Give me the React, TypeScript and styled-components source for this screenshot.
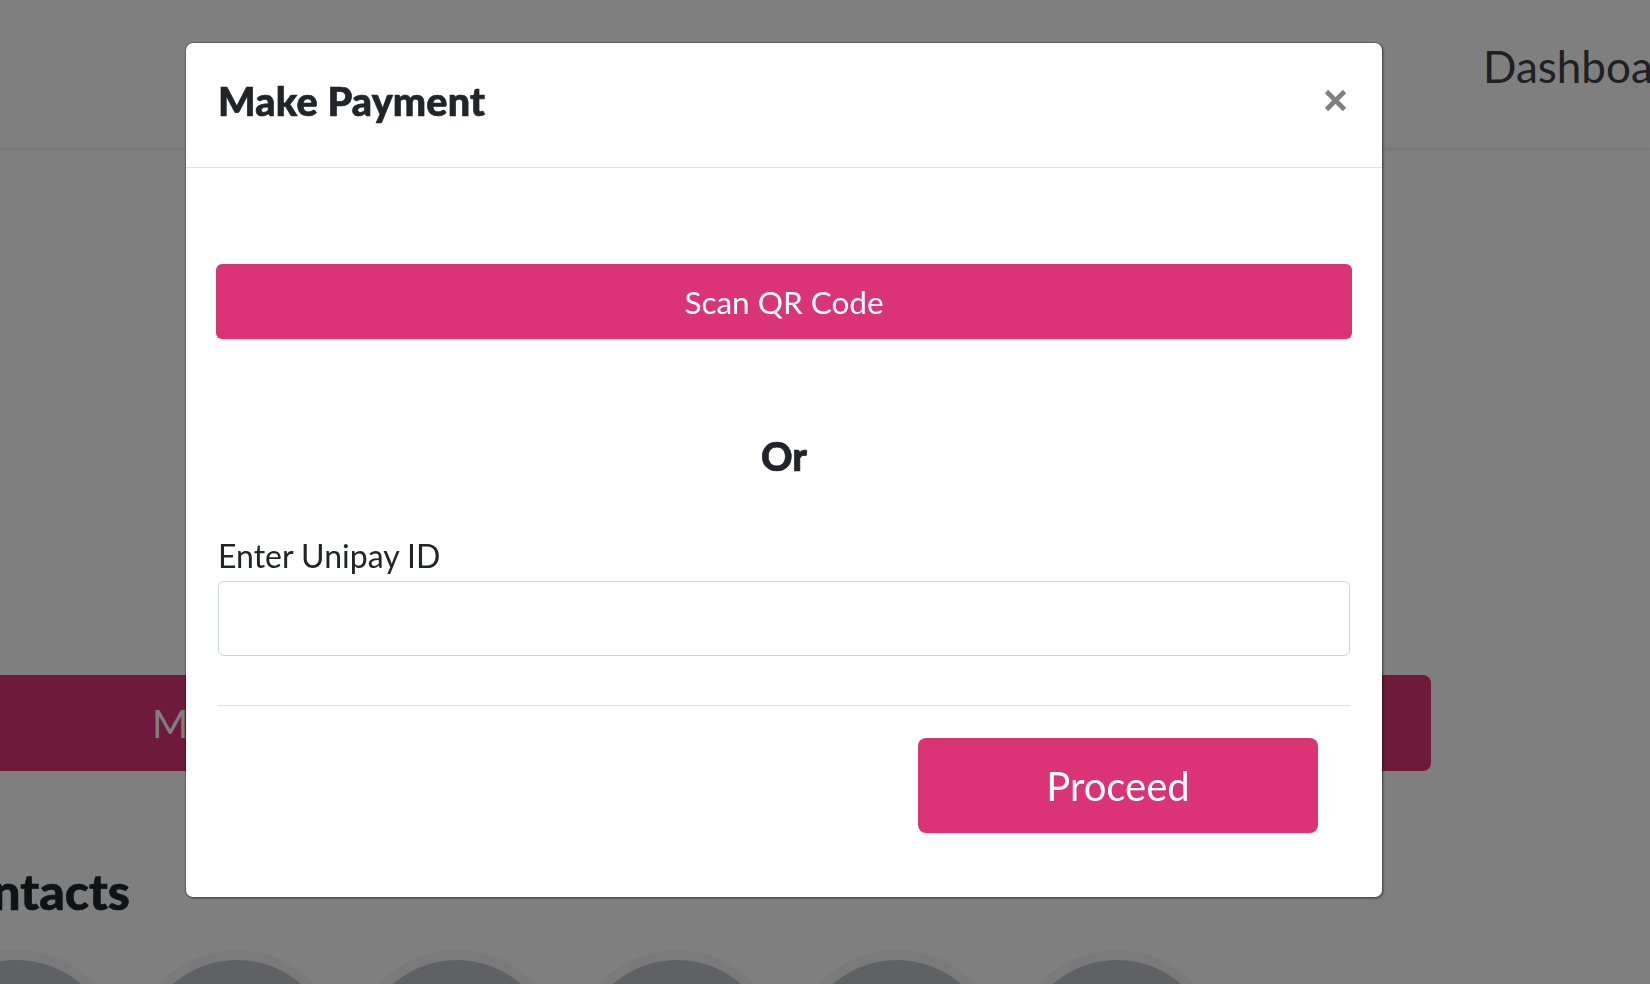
import React from 'react'
import styled, { createGlobalStyle } from 'styled-components'

const GlobalStyle = createGlobalStyle`
  html, body {
    margin: 0;
    padding: 0;
  }
  body {
    font-family: Lato, "Open Sans", "Liberation Sans", sans-serif;
    color: #212529;
    background: #ffffff;
    overflow: hidden;
  }
  * {
    box-sizing: border-box;
  }
`

const Page = styled.div`
  width: 1650px;
  height: 984px;
  overflow: hidden;
`

const NavBar = styled.header`
  height: 149px;
  padding: 40px 0 0 1483px;
  border-bottom: 1px solid #ececec;
  box-shadow: 0 2px 4px rgba(0, 0, 0, 0.04);
  display: flex;
  align-items: flex-start;
`

const NavLink = styled.a`
  font-size: 44px;
  line-height: 1.2;
  color: #3d4147;
  white-space: nowrap;
  text-decoration: none;
`

const Main = styled.main`
  margin-left: -90px;
  width: 1521px;
`

const WideButton = styled.button`
  display: block;
  width: 100%;
  height: 96px;
  margin-top: 526px;
  padding: 0 0 0 242px;
  border: none;
  border-radius: 8px;
  background: #da3476;
  color: #ffffff;
  font-family: inherit;
  font-size: 39px;
  text-align: left;
`

const SectionTitle = styled.h2`
  margin: 90px 0 0 21px;
  font-size: 50px;
  font-weight: 900;
  line-height: 1.2;
  color: #212529;
  -webkit-text-stroke: 0.6px #212529;
`

const ContactRow = styled.div`
  display: flex;
  gap: 6px;
  margin-top: 29px;
`

const Avatar = styled.div`
  flex: none;
  width: 214px;
  height: 214px;
  border-radius: 50%;
  border: 10px solid #f4f4f4;
  background: #bec2c9;
`

const Backdrop = styled.div`
  position: fixed;
  inset: 0;
  background: rgba(0, 0, 0, 0.5);
`

const ModalLayer = styled.div`
  position: fixed;
  inset: 0;
  padding: 42px 0 0 185px;
`

const ModalBox = styled.div`
  width: 1198px;
  background: #ffffff;
  background-clip: padding-box;
  border: 1px solid rgba(0, 0, 0, 0.2);
  border-radius: 8px;
  box-shadow: 1px 1px 2px rgba(0, 0, 0, 0.25);
`

const ModalHeader = styled.div`
  height: 125px;
  padding: 0 35px 9px 32px;
  border-bottom: 1px solid #dee2e6;
  display: flex;
  align-items: center;
  justify-content: space-between;
`

const ModalTitle = styled.h5`
  margin: 0;
  font-size: 39.5px;
  font-weight: 900;
  line-height: 1.2;
  color: #212529;
  -webkit-text-stroke: 0.7px #212529;
  letter-spacing: 0.2px;
`

const CloseButton = styled.button`
  width: 23px;
  height: 23px;
  padding: 0;
  border: none;
  background: none;
  display: flex;
  cursor: pointer;
`

const ModalBody = styled.div`
  padding: 96px 30px 64px;
`

const PinkButton = styled.button<{ $wide?: boolean }>`
  display: block;
  width: ${(p) => (p.$wide ? '100%' : '400px')};
  height: ${(p) => (p.$wide ? '75px' : '95px')};
  border: none;
  border-radius: ${(p) => (p.$wide ? '6px' : '8px')};
  background: #da3476;
  color: #ffffff;
  font-family: inherit;
  font-size: ${(p) => (p.$wide ? '31.5px' : '40px')};
  text-align: center;
  cursor: pointer;
`

const OrText = styled.h4`
  margin: 94px 0 0;
  font-size: 39px;
  font-weight: 900;
  line-height: 47px;
  text-align: center;
  color: #212529;
  -webkit-text-stroke: 0.7px #212529;
`

const FormGroup = styled.div`
  margin-top: 56px;
  padding: 0 2px;
`

const Label = styled.label`
  display: block;
  font-size: 32px;
  line-height: 40px;
  color: #212529;
`

const TextInput = styled.input`
  display: block;
  width: 100%;
  height: 75px;
  margin-top: 5px;
  padding: 0 20px;
  border: 1px solid #ced4da;
  border-radius: 6px;
  font-family: inherit;
  font-size: 32px;
  outline: none;
`

const Divider = styled.hr`
  margin: 49px 0 0;
  border: none;
  border-top: 1px solid #dee2e6;
`

const Footer = styled.div`
  display: flex;
  justify-content: flex-end;
  padding: 32px 32px 0 0;
`

const CloseIcon = () => (
  <svg width="23" height="23" viewBox="0 0 23 23">
    <path d="M2.5 2.5 L20.5 20.5 M20.5 2.5 L2.5 20.5" stroke="#808080" strokeWidth="4.6" fill="none" />
  </svg>
)

const App = () => {
  const contacts = [0, 1, 2, 3, 4, 5]
  return (
    <>
      <GlobalStyle />
      <Page>
        <NavBar>
          <NavLink href="#">Dashboard</NavLink>
        </NavBar>
        <Main>
          <WideButton>Make Payment</WideButton>
          <SectionTitle>Contacts</SectionTitle>
          <ContactRow>
            {contacts.map((c) => (
              <Avatar key={c} />
            ))}
          </ContactRow>
        </Main>
      </Page>
      <Backdrop />
      <ModalLayer>
        <ModalBox>
          <ModalHeader>
            <ModalTitle>Make Payment</ModalTitle>
            <CloseButton aria-label="Close">
              <CloseIcon />
            </CloseButton>
          </ModalHeader>
          <ModalBody>
            <PinkButton $wide>Scan QR Code</PinkButton>
            <OrText>Or</OrText>
            <FormGroup>
              <Label htmlFor="unipay">Enter Unipay ID</Label>
              <TextInput id="unipay" type="text" />
              <Divider />
              <Footer>
                <PinkButton>Proceed</PinkButton>
              </Footer>
            </FormGroup>
          </ModalBody>
        </ModalBox>
      </ModalLayer>
    </>
  )
}

export default App
